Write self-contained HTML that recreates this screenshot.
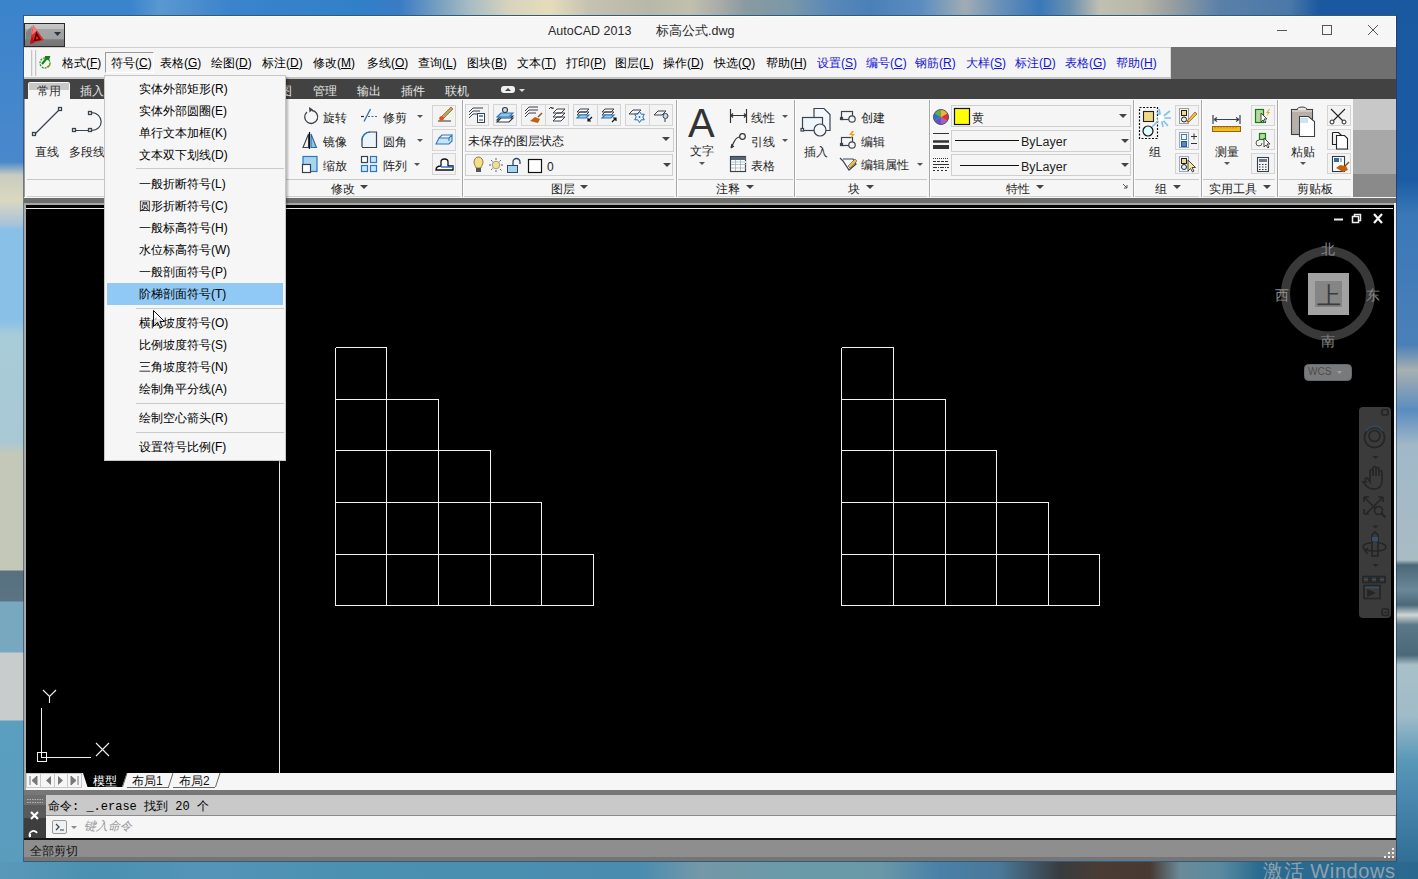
<!DOCTYPE html>
<html><head><meta charset="utf-8">
<style>
*{margin:0;padding:0;box-sizing:border-box}
html,body{width:1418px;height:879px;overflow:hidden}
body{position:relative;font-family:"Liberation Sans",sans-serif;font-size:12px;color:#222;background:#4a8ec0}
.a{position:absolute}
.t{position:absolute;white-space:nowrap;line-height:16px;height:16px;font-size:12px}
.mi{position:absolute;top:55px;white-space:nowrap;line-height:16px;font-size:12px;color:#000}
.mi u{text-decoration:underline}
.bl{color:#1414d4}
.tab{position:absolute;top:83px;line-height:16px;font-size:12px;color:#e6e6e6;white-space:nowrap}
.rt{color:#1e1e1e}
.sb{position:absolute;border:1px solid #d4d4d4;background:#f3f3f3}
.dd{position:absolute;border:1px solid #cfcfcf;background:#f5f5f5}
.arr{position:absolute;width:0;height:0;border-left:4px solid transparent;border-right:4px solid transparent;border-top:4px solid #444}
.arrs{position:absolute;width:0;height:0;border-left:3px solid transparent;border-right:3px solid transparent;border-top:3px solid #555}
.vsep{position:absolute;top:100px;width:2px;height:97px;background:#a8a8a8;border-right:1px solid #fff}
.ptl{position:absolute;top:179px;height:1px;background:#c8c8c8}
.menu .it{position:absolute;left:34px;line-height:16px;font-size:12px;color:#000;white-space:nowrap}
.menu .sp{position:absolute;left:31px;width:148px;height:1px;background:#cacaca}
</style></head><body>
<!-- ============ DESKTOP ============ -->
<div class="a" style="left:0;top:0;width:1418px;height:15px;background:linear-gradient(90deg,#3a84cc 0px,#3a84cc 130px,#5a98d0 160px,#4a8ccc 200px,#3a84cc 230px,#3080c8 360px,#3a7cc4 400px,#6a98c0 430px,#a8bcc4 470px,#d8d4bc 510px,#e4dcbc 550px,#c4c2b0 590px,#b8b8a8 650px,#c0c0ac 690px,#a8aca8 720px,#8a9aa0 745px,#7a98a8 790px,#5a88b8 830px,#4a80b8 870px,#5a8cc0 920px,#a0acb4 965px,#6a90b8 1000px,#3a78b8 1040px,#6a90b0 1070px,#c0c0b0 1100px,#b8b8a8 1140px,#9aa0a0 1170px,#5a80a8 1220px,#4a78a8 1290px,#1a58a0 1320px,#1a58a0 1418px)"></div>
<div class="a" style="left:0;top:15px;width:24px;height:864px;background:linear-gradient(180deg,#3c84cc 0px,#4a88cc 147px,#c8ccc0 160px,#dcd8c0 185px,#a8c4d8 209px,#88c0e8 215px,#88c0e8 305px,#a8ccd8 320px,#a8c8d4 425px,#c4c8b8 440px,#c4c8b8 555px,#587080 556px,#5a7484 586px,#78a8c0 587px,#78a8c0 637px,#c8cccc 638px,#c8cccc 705px,#5a9ec0 706px,#5a9cbc 864px)"></div>
<div class="a" style="left:1396px;top:15px;width:22px;height:864px;background:linear-gradient(180deg,#1a58a0 0px,#1c5ca4 165px,#3a78b8 200px,#4a80b8 330px,#a8b0b0 355px,#5a8cc0 395px,#a0b8c8 430px,#a8bcc4 545px,#4a6878 550px,#6a8898 575px,#4a6878 590px,#d0d8d8 600px,#5a7888 610px,#4a6878 640px,#a8c0c8 650px,#a0bcc8 700px,#5a98b8 745px,#4a88b0 780px,#2a6890 864px)"></div>
<div class="a" style="left:0;top:862px;width:1418px;height:17px;background:linear-gradient(90deg,#5a98b8 0px,#4a90b0 100px,#5494b8 200px,#4a90b0 360px,#4a8cb0 640px,#7498a8 700px,#6a9aa8 800px,#6a98a8 880px,#4a80a8 940px,#4a7898 1000px,#383c40 1060px,#4a3c34 1100px,#483a32 1150px,#6a8a98 1180px,#5a8aa0 1220px,#2a6a90 1260px,#2a6890 1418px)"></div>
<div class="a" style="left:1263px;top:859px;font-size:20px;letter-spacing:0.6px;line-height:24px;color:#8fa2ac;white-space:nowrap">激活 Windows</div>

<!-- ============ TITLE BAR ============ -->
<div class="a" style="left:23px;top:15px;width:1374px;height:847px;border:1px solid rgba(30,50,70,0.55)"></div>
<div class="a" style="left:24px;top:16px;width:1372px;height:31px;background:#f6f6f6;border-top:1px solid #fff;border-left:1px solid #fff;border-right:1px solid #fff"></div>
<div class="a" style="left:24px;top:23px;width:41px;height:24px;border:1px solid #2a2a2a;background:linear-gradient(180deg,#c8c8c8 0%,#c0c0c0 22%,#a4a4a4 24%,#a0a0a0 68%,#7a8a9a 70%,#7c7c7c 74%,#747474 100%)"></div>
<svg class="a" style="left:25px;top:24px" width="39" height="22" viewBox="0 0 39 22">
 <path d="M1 8 L7 2 L5 20 L1 20 Z" fill="#7a7a7a" opacity="0.8"/>
 <path d="M8 1 L19 16 L5 20 Z" fill="#e42424"/>
 <path d="M8 1 L12 6.5 L7 11 Z" fill="#f07a7a"/>
 <path d="M5 20 L7 11 L9 19 Z" fill="#b01818"/>
 <path d="M9.5 16.5 L11.5 9.5 L15 15.5 Z" fill="none" stroke="#500" stroke-width="1.6"/>
 <path d="M29 8 L36 8 L32.5 12 Z" fill="#2a3340"/>
</svg>
<div class="a" style="left:548px;top:23px;font-size:12.5px;line-height:16px;color:#2a2a2a;white-space:nowrap">AutoCAD 2013</div>
<div class="a" style="left:656px;top:23px;font-size:12.5px;line-height:16px;color:#2a2a2a;white-space:nowrap">标高公式.dwg</div>
<div class="a" style="left:1277px;top:30px;width:10px;height:1px;background:#555"></div>
<div class="a" style="left:1322px;top:25px;width:10px;height:10px;border:1px solid #555"></div>
<svg class="a" style="left:1367px;top:24px" width="12" height="12"><path d="M1 1 L11 11 M11 1 L1 11" stroke="#555" stroke-width="1"/></svg>

<!-- ============ MENU BAR ============ -->
<div class="a" style="left:24px;top:47px;width:1147px;height:32px;background:#f5f5f5;border-top:1px solid #cfcfcf;border-right:1px solid #d8d8d8"></div>
<div class="a" style="left:24px;top:77px;width:1147px;height:2px;background:#c4c4c4"></div>
<div class="a" style="left:1171px;top:47px;width:225px;height:32px;background:#6f706f"></div>
<div class="a" style="left:31px;top:50px;width:2px;height:26px;border-left:1px solid #c4c4c4;border-right:1px solid #e8e8e8"></div>
<div class="a" style="left:35px;top:50px;width:2px;height:26px;border-left:1px solid #c4c4c4;border-right:1px solid #e8e8e8"></div>
<svg class="a" style="left:38px;top:54px" width="14" height="16" viewBox="0 0 14 16">
 <circle cx="7" cy="9" r="5" fill="none" stroke="#2a9a2a" stroke-width="1.3" stroke-dasharray="2 1"/>
 <path d="M4 10 L9 4 M7 3 L11 3 L10 6" stroke="#108010" stroke-width="2" fill="none"/>
 <path d="M9 13 L12 11" stroke="#9a8a20" stroke-width="1.5"/>
</svg>
<div class="a" style="left:105px;top:52px;width:49px;height:21px;border-left:1px solid #9a9a9a;border-top:1px solid #9a9a9a;border-right:1px solid #fff;border-bottom:1px solid #fff"></div>
<div class="mi" style="left:62px">格式(<u>F</u>)</div>
<div class="mi" style="left:111px">符号(<u>C</u>)</div>
<div class="mi" style="left:160px">表格(<u>G</u>)</div>
<div class="mi" style="left:211px">绘图(<u>D</u>)</div>
<div class="mi" style="left:262px">标注(<u>D</u>)</div>
<div class="mi" style="left:313px">修改(<u>M</u>)</div>
<div class="mi" style="left:367px">多线(<u>O</u>)</div>
<div class="mi" style="left:418px">查询(<u>L</u>)</div>
<div class="mi" style="left:467px">图块(<u>B</u>)</div>
<div class="mi" style="left:517px">文本(<u>T</u>)</div>
<div class="mi" style="left:566px">打印(<u>P</u>)</div>
<div class="mi" style="left:615px">图层(<u>L</u>)</div>
<div class="mi" style="left:663px">操作(<u>D</u>)</div>
<div class="mi" style="left:714px">快选(<u>Q</u>)</div>
<div class="mi" style="left:766px">帮助(<u>H</u>)</div>
<div class="mi bl" style="left:817px">设置(<u>S</u>)</div>
<div class="mi bl" style="left:866px">编号(<u>C</u>)</div>
<div class="mi bl" style="left:915px">钢筋(<u>R</u>)</div>
<div class="mi bl" style="left:966px">大样(<u>S</u>)</div>
<div class="mi bl" style="left:1015px">标注(<u>D</u>)</div>
<div class="mi bl" style="left:1065px">表格(<u>G</u>)</div>
<div class="mi bl" style="left:1116px">帮助(<u>H</u>)</div>

<!-- ============ TAB BAR ============ -->
<div class="a" style="left:24px;top:79px;width:1372px;height:20px;background:#424242"></div>
<div class="a" style="left:28px;top:82px;width:42px;height:17px;background:#f5f5f5;border-radius:2px 2px 0 0"></div>
<div class="a" style="left:29px;top:83px;width:40px;height:7px;background:#c8c8c8"></div>
<div class="tab" style="left:37px;color:#333">常用</div>
<div class="tab" style="left:80px">插入</div>
<div class="tab" style="left:268px">视图</div>
<div class="tab" style="left:313px">管理</div>
<div class="tab" style="left:357px">输出</div>
<div class="tab" style="left:401px">插件</div>
<div class="tab" style="left:445px">联机</div>
<div class="a" style="left:501px;top:86px;width:14px;height:7px;background:#f0f0f0;border-radius:3px"></div>
<div class="arrs" style="left:505px;top:88px;border-top:0;border-bottom:3px solid #444"></div>
<div class="arrs" style="left:519px;top:89px;border-top-color:#ddd"></div>

<!-- ============ RIBBON ============ -->
<div class="a" style="left:24px;top:99px;width:1329px;height:99px;background:#f6f6f6;border-left:1px solid #9a9a9a"></div>
<div class="a" style="left:1353px;top:99px;width:43px;height:31px;background:#c8c8c8"></div>
<div class="a" style="left:1353px;top:130px;width:43px;height:44px;background:#a8a8a8"></div>
<div class="a" style="left:1353px;top:174px;width:43px;height:24px;background:#8a8a8a"></div>
<div class="a" style="left:24px;top:197px;width:1372px;height:1px;background:#f4f4f4"></div>
<div class="a" style="left:24px;top:198px;width:1372px;height:5px;background:#6b6d6b"></div>
<div class="a" style="left:24px;top:203px;width:1372px;height:2px;background:#a6a6a6"></div>

<div class="ptl" style="left:27px;width:433px"></div>
<div class="a" style="left:27px;top:196px;width:433px;height:1px;background:#d0d0d0"></div>
<div class="t rt" style="left:35px;top:144px;">直线</div>
<div class="t rt" style="left:69px;top:144px;">多段线</div>
<div class="t rt" style="left:323px;top:110px;">旋转</div>
<div class="t rt" style="left:323px;top:134px;">镜像</div>
<div class="t rt" style="left:323px;top:158px;">缩放</div>
<div class="t rt" style="left:383px;top:110px;">修剪</div>
<div class="t rt" style="left:383px;top:134px;">圆角</div>
<div class="t rt" style="left:383px;top:158px;">阵列</div>
<div class="arrs" style="left:417px;top:115px"></div>
<div class="arrs" style="left:417px;top:139px"></div>
<div class="arrs" style="left:414px;top:163px"></div>
<div class="sb" style="left:432px;top:105px;width:24px;height:22px"></div>
<div class="sb" style="left:432px;top:129px;width:24px;height:22px"></div>
<div class="sb" style="left:432px;top:153px;width:24px;height:22px"></div>
<div class="t rt" style="left:331px;top:181px;">修改</div>
<div class="arr" style="left:360px;top:185px"></div>
<div class="vsep" style="left:462px"></div>
<div class="ptl" style="left:464px;width:210px"></div>
<div class="a" style="left:464px;top:196px;width:210px;height:1px;background:#d0d0d0"></div>
<div class="sb" style="left:465px;top:104px;width:24px;height:22px"></div>
<div class="sb" style="left:493px;top:104px;width:24px;height:22px"></div>
<div class="sb" style="left:521px;top:104px;width:48px;height:22px"></div>
<div class="sb" style="left:573px;top:104px;width:48px;height:22px"></div>
<div class="sb" style="left:625px;top:104px;width:48px;height:22px"></div>
<div class="a" style="left:545px;top:105px;width:1px;height:20px;background:#d4d4d4"></div>
<div class="a" style="left:597px;top:105px;width:1px;height:20px;background:#d4d4d4"></div>
<div class="a" style="left:649px;top:105px;width:1px;height:20px;background:#d4d4d4"></div>
<div class="dd" style="left:465px;top:128px;width:209px;height:24px"></div>
<div class="dd" style="left:465px;top:154px;width:208px;height:22px"></div>
<div class="t rt" style="left:468px;top:133px;">未保存的图层状态</div>
<div class="arr" style="left:662px;top:137px"></div>
<div class="arr" style="left:663px;top:163px"></div>
<div class="t rt" style="left:547px;top:159px;">0</div>
<div class="t rt" style="left:551px;top:181px;">图层</div>
<div class="arr" style="left:580px;top:185px"></div>
<div class="vsep" style="left:676px"></div>
<div class="ptl" style="left:678px;width:115px"></div>
<div class="a" style="left:678px;top:196px;width:115px;height:1px;background:#d0d0d0"></div>
<div class="a" style="left:688px;top:101px;font-size:40px;line-height:44px;color:#333">A</div>
<div class="t rt" style="left:690px;top:143px;">文字</div>
<div class="arrs" style="left:699px;top:162px"></div>
<div class="t rt" style="left:751px;top:110px;">线性</div>
<div class="t rt" style="left:751px;top:134px;">引线</div>
<div class="t rt" style="left:751px;top:158px;">表格</div>
<div class="arrs" style="left:782px;top:115px"></div>
<div class="arrs" style="left:782px;top:139px"></div>
<div class="t rt" style="left:716px;top:181px;">注释</div>
<div class="arr" style="left:746px;top:185px"></div>
<div class="vsep" style="left:794px"></div>
<div class="ptl" style="left:796px;width:131px"></div>
<div class="a" style="left:796px;top:196px;width:131px;height:1px;background:#d0d0d0"></div>
<div class="t rt" style="left:804px;top:144px;">插入</div>
<div class="t rt" style="left:861px;top:110px;">创建</div>
<div class="t rt" style="left:861px;top:134px;">编辑</div>
<div class="t rt" style="left:861px;top:157px;">编辑属性</div>
<div class="arrs" style="left:917px;top:163px"></div>
<div class="t rt" style="left:848px;top:181px;">块</div>
<div class="arr" style="left:866px;top:185px"></div>
<div class="vsep" style="left:929px"></div>
<div class="ptl" style="left:931px;width:200px"></div>
<div class="a" style="left:931px;top:196px;width:200px;height:1px;background:#d0d0d0"></div>
<div class="dd" style="left:951px;top:105px;width:180px;height:22px"></div>
<div class="dd" style="left:951px;top:130px;width:180px;height:22px"></div>
<div class="dd" style="left:951px;top:154px;width:180px;height:22px"></div>
<div class="t rt" style="left:972px;top:110px;">黄</div>
<div class="t rt" style="left:1021px;top:134px;font-size:12.5px">ByLayer</div>
<div class="t rt" style="left:1021px;top:159px;font-size:12.5px">ByLayer</div>
<div class="arr" style="left:1119px;top:114px"></div>
<div class="arr" style="left:1121px;top:139px"></div>
<div class="arr" style="left:1121px;top:163px"></div>
<div class="t rt" style="left:1006px;top:181px;">特性</div>
<div class="arr" style="left:1036px;top:185px"></div>
<div class="vsep" style="left:1133px"></div>
<div class="ptl" style="left:1135px;width:64px"></div>
<div class="a" style="left:1135px;top:196px;width:64px;height:1px;background:#d0d0d0"></div>
<div class="t rt" style="left:1149px;top:144px;">组</div>
<div class="sb" style="left:1175px;top:105px;width:24px;height:21px"></div>
<div class="sb" style="left:1175px;top:129px;width:24px;height:21px"></div>
<div class="sb" style="left:1175px;top:153px;width:24px;height:21px"></div>
<div class="t rt" style="left:1155px;top:181px;">组</div>
<div class="arr" style="left:1173px;top:185px"></div>
<div class="vsep" style="left:1201px"></div>
<div class="ptl" style="left:1203px;width:72px"></div>
<div class="a" style="left:1203px;top:196px;width:72px;height:1px;background:#d0d0d0"></div>
<div class="t rt" style="left:1215px;top:144px;">测量</div>
<div class="arrs" style="left:1224px;top:162px"></div>
<div class="sb" style="left:1251px;top:105px;width:24px;height:21px"></div>
<div class="sb" style="left:1251px;top:129px;width:24px;height:21px"></div>
<div class="sb" style="left:1251px;top:153px;width:24px;height:21px"></div>
<div class="t rt" style="left:1209px;top:181px;">实用工具</div>
<div class="arr" style="left:1263px;top:185px"></div>
<div class="vsep" style="left:1277px"></div>
<div class="ptl" style="left:1279px;width:72px"></div>
<div class="a" style="left:1279px;top:196px;width:72px;height:1px;background:#d0d0d0"></div>
<div class="t rt" style="left:1291px;top:144px;">粘贴</div>
<div class="arrs" style="left:1300px;top:162px"></div>
<div class="sb" style="left:1327px;top:105px;width:24px;height:21px"></div>
<div class="sb" style="left:1327px;top:129px;width:24px;height:21px"></div>
<div class="sb" style="left:1327px;top:153px;width:24px;height:21px"></div>
<div class="t rt" style="left:1297px;top:181px;">剪贴板</div>
<svg class="a" style="left:0;top:0" width="1418" height="210" viewBox="0 0 1418 210">
<g fill="none" stroke="#3a4450" stroke-width="1.2">
 <path d="M35 134L59 110"/>
 <rect x="32.5" y="132.5" width="3" height="3" stroke-width="1.3"/><rect x="58.5" y="107.5" width="3" height="3" stroke-width="1.3"/>
 <path d="M76 130.5H89M91 112.5c13 0 14 18 0 18"/>
 <rect x="72.5" y="128.5" width="3" height="3" stroke-width="1.3"/><rect x="88.5" y="128.5" width="3" height="3" stroke-width="1.3"/><rect x="88.5" y="111.5" width="3" height="3" stroke-width="1.3"/>
</g>
<!-- modify icons -->
<g fill="none" stroke="#3a4048" stroke-width="1.3">
 <path d="M312 110.5a6.5 6.5 0 1 1 -5 1.5"/>
</g>
<path d="M309 107l4 2.5l-3.5 3z" fill="#3a4048"/>
<path d="M303 147.5L308.5 134V147.5Z" fill="none" stroke="#3a4048" stroke-width="1.1"/>
<path d="M309.5 132V149" stroke="#111" stroke-width="1.2"/>
<path d="M311 147.5V134L316.5 147.5Z" fill="#8cc4e4" stroke="#2a6aa8" stroke-width="1.1"/>
<rect x="303" y="156.5" width="14" height="15" fill="#a8d4ec" stroke="#2a78c0" stroke-width="1.2"/>
<rect x="302.5" y="164.5" width="8" height="8" fill="#fff" stroke="#3a4048" stroke-width="1.2"/>
<path d="M364 121.5L370.5 109" stroke="#2a6ab8" stroke-width="1.3" fill="none"/><path d="M361 116.5h3" stroke="#333" stroke-width="1.2"/><path d="M368 116.5h2M371.5 116.5h2M375 116.5h2" stroke="#2a6ab8" stroke-width="1.1"/>
<path d="M362 147V140a8 8 0 0 1 8-8h6.5V147.5H362" fill="#eaf4fa" stroke="#3a4048" stroke-width="1.2"/>
<path d="M362 140a8 8 0 0 1 8-8" fill="none" stroke="#2a78c0" stroke-width="1.3"/>
<g stroke-width="1.2"><rect x="361.5" y="156.5" width="6" height="6" fill="#fff" stroke="#3a4048"/><rect x="370.5" y="156.5" width="6" height="6" fill="#cde6f4" stroke="#2a78c0"/><rect x="361.5" y="165.5" width="6" height="6" fill="#cde6f4" stroke="#2a78c0"/><rect x="370.5" y="165.5" width="6" height="6" fill="#cde6f4" stroke="#2a78c0"/></g>
<path d="M438 121h13" stroke="#333" stroke-width="1"/>
<path d="M441 117l10-10l2 2l-10 10z" fill="#c8a060" stroke="#8a6a30" stroke-width="0.8"/>
<circle cx="441.5" cy="118.5" r="2.3" fill="#e05010"/>
<path d="M436 144l3-6h10l3-3v6l-3 3h-10z" fill="#c8e4f4" stroke="#2a78c0" stroke-width="1.1"/>
<path d="M439 138l3-3h10M449 141v-3" stroke="#2a78c0" stroke-width="1.1" fill="none"/>
<path d="M436 170c0-4 4-4 5-4v-4c0-4 7-4 7 0v4h5v4z" fill="#fff" stroke="#111" stroke-width="1.3"/>
<path d="M441 167h12" stroke="#2a78c0" stroke-width="1.5"/>
<!-- layer icons -->
<g fill="none" stroke="#3a4048" stroke-width="1">
 <path d="M469 112l4-4h10M469 115l4-4h7M469 118l4-4h6"/>
 <rect x="477.5" y="113.5" width="7" height="9" fill="#fff"/>
 <path d="M479 116h4" stroke="#2a6ab0" stroke-width="1.5"/><path d="M479 120h4"/>
</g>
<g stroke="#2a3a4a" stroke-width="1.1" fill="none">
 <path d="M497 120l4-4h12l-4 4z" fill="#fff"/><path d="M497 122l4-4h12l-4 4z" fill="#fff"/>
 <path d="M497 117l4-4h12l-4 4z" fill="#8ac8f0" stroke="#2a78c0"/>
 <circle cx="505" cy="110" r="2.5" fill="#ddd"/>
</g>
<g stroke="#3a4048" stroke-width="1" fill="none">
 <path d="M525 111l4-4h9M525 114l4-4h9M525 117l4-4h7"/>
</g>
<path d="M530 121l5-4l5 2l-2 4z" fill="#c06010"/><path d="M538 117l4-4" stroke="#8a5020" stroke-width="1.5"/>
<g stroke="#3a4048" stroke-width="1" fill="none">
 <path d="M553 113l4-4h8l-4 4zM553 117l4-4h8l-4 4zM553 121l4-4h8l-4 4z" fill="#fff"/>
 <path d="M549 109l2-2l2 2M551 107v1h3"/>
</g>
<g stroke="#3a4048" stroke-width="1" fill="none">
 <path d="M577 112l3-3h9l-3 3zM577 115l3-3h9l-3 3z" fill="#fff"/>
 <path d="M577 118l3-3h9l-3 3z" fill="#9ad0f0" stroke="#2a78c0" stroke-width="1.2"/>
 <path d="M592 117l-4 4M588 118v3h3" stroke="#111" stroke-width="1.2"/>
 <path d="M602 112l3-3h9l-3 3zM602 115l3-3h9l-3 3z" fill="#fff"/>
 <path d="M602 118l3-3h9l-3 3z" fill="#9ad0f0" stroke="#2a78c0" stroke-width="1.2"/>
 <path d="M612 122l4-4M613 118h3v3" stroke="#111" stroke-width="1.2"/>
</g>
<g stroke="#3a4048" stroke-width="1" fill="none">
 <path d="M629 114l4-4h8l-4 4z"/>
 <path d="M639.5 111.5l1.8 2.7h3l-1.5 2.8l1.5 2.8h-3l-1.8 2.7l-1.8-2.7h-3l1.5-2.8l-1.5-2.8h3z" stroke="#2a6ab8" fill="#e8f2fa"/><circle cx="639.5" cy="117" r="0.9" fill="#2a6ab8" stroke="none"/>
 <path d="M654 115l4-4h8l-4 4z"/>
 <circle cx="665.5" cy="116" r="2.5" fill="#bde"/><path d="M665 119v3" stroke="#333"/>
</g>
<path d="M474 162a4.5 5 0 1 1 9 0c0 3-2 4-2 6h-5c0-2-2-3-2-6z" fill="#f4e080" stroke="#6a6040" stroke-width="0.8"/>
<rect x="476" y="168" width="5" height="4" fill="#555"/>
<circle cx="496" cy="165" r="3.8" fill="#f0e090" stroke="#888" stroke-width="0.8"/>
<path d="M496 158v2M496 170v2M489 165h2M501 165h2M491 160l1.5 1.5M500 169l1.5 1.5M501 160l-1.5 1.5M491 170l1.5-1.5" stroke="#555" stroke-width="0.9"/>
<rect x="507.5" y="165.5" width="10" height="7" fill="#a8d4ec" stroke="#2a4a6a" stroke-width="1"/>
<path d="M513 165v-3a3.5 3.5 0 0 1 7 0v2" fill="none" stroke="#2a4a6a" stroke-width="1.3"/>
<rect x="528.5" y="159.5" width="13" height="13" fill="#fff" stroke="#111" stroke-width="1.2"/>
<!-- annotation icons -->
<g stroke="#333" stroke-width="1.2" fill="none">
 <path d="M730.5 109V123M746.5 109V123M731 115.5H746"/>
 <path d="M733 113.5l-2 2l2 2M744 113.5l2 2l-2 2"/>
 <circle cx="742.5" cy="136.5" r="2.8"/>
 <path d="M740 137c-4 0-5 3-6 5l-3 6M731 148l1-4M731 148l3-2"/>
 <rect x="730.5" y="156.5" width="15" height="15" fill="#fff" stroke="#3a4450"/>
</g>
<rect x="731" y="157" width="15" height="3" fill="#5a6470"/>
<path d="M731 161h15v2h-15z" fill="#cde6f0"/>
<path d="M735.5 160v11M740.5 160v11M731 164.5h15M731 168h15" stroke="#aab" stroke-width="0.8"/>
<!-- block icons -->
<g stroke="#3a4450" stroke-width="1.2" fill="none">
 <path d="M814 108.5h10l6 6v16h-16z" fill="#f2f8fb"/>
 <rect x="802.5" y="117.5" width="20" height="13" fill="#eef6fa"/>
 <circle cx="820" cy="130" r="6" fill="#f6f6f6"/>
 <rect x="801" y="128.5" width="2.5" height="2.5" fill="#fff"/>
 <rect x="841.5" y="111.5" width="11" height="8"/><circle cx="852" cy="119" r="3.2" fill="#f6f6f6"/><rect x="840.5" y="117.5" width="2" height="2"/>
 <rect x="841.5" y="137.5" width="11" height="8"/><circle cx="852" cy="145" r="3.2" fill="#f6f6f6"/><rect x="840.5" y="143.5" width="2" height="2"/>
 <path d="M840 158l3 3l6 9l7-6l-3-5h-10"/>
</g>
<path d="M852 131l-3 4h3l-2 4l5-5h-3l2-3z" fill="#f0a010"/>
<path d="M848 166l7-7l2 2l-7 7z" fill="#f0c040" stroke="#555" stroke-width="0.6"/>
<!-- properties icons -->
<circle cx="941" cy="117" r="7.5" fill="#e0c040"/>
<path d="M941 117L941 109.5A7.5 7.5 0 0 0 934.5 113.2Z" fill="#60b040"/>
<path d="M941 117L934.5 113.2A7.5 7.5 0 0 0 934.5 120.8Z" fill="#3070d0"/>
<path d="M941 117L934.5 120.8A7.5 7.5 0 0 0 941 124.5Z" fill="#6a50c0"/>
<path d="M941 117L941 124.5A7.5 7.5 0 0 0 947.5 120.8Z" fill="#a060d0"/>
<path d="M941 117L947.5 120.8A7.5 7.5 0 0 0 947.5 113.2Z" fill="#e03030"/>
<path d="M941 117L947.5 113.2A7.5 7.5 0 0 0 941 109.5Z" fill="#f0b040"/>
<circle cx="941" cy="117" r="7.5" fill="none" stroke="#4a5a6a" stroke-width="1"/>
<rect x="954.5" y="108.5" width="15" height="16" fill="#ffff00" stroke="#111" stroke-width="1.2"/>
<path d="M933 133.5h16" stroke="#333" stroke-width="1"/>
<path d="M933 141.5h16" stroke="#333" stroke-width="2.5"/>
<path d="M933 147h16" stroke="#333" stroke-width="4"/>
<path d="M933 158.5h16" stroke="#333" stroke-width="1" stroke-dasharray="1 1"/><path d="M933 161.5h16" stroke="#333" stroke-width="1" stroke-dasharray="3 1"/><path d="M933 164.5h16" stroke="#333" stroke-width="1"/><path d="M933 167.5h16" stroke="#333" stroke-width="1" stroke-dasharray="4 1 1 1"/><path d="M933 170.5h16" stroke="#333" stroke-width="1" stroke-dasharray="2 2"/>
<path d="M955 140.5H1019M960 165.5H1019" stroke="#111" stroke-width="1"/>
<path d="M1123 184l4 4M1127 185v3h-3" stroke="#555" stroke-width="1" fill="none"/>
<!-- group icons -->
<rect x="1139.5" y="107.5" width="18" height="31" fill="none" stroke="#111" stroke-width="1.2" stroke-dasharray="2 1.5"/>
<rect x="1143.5" y="111.5" width="10" height="10" fill="#f0d888" stroke="#222" stroke-width="1.1"/>
<circle cx="1148" cy="131" r="5" fill="#dff" stroke="#111" stroke-width="1.2"/>
<path d="M1161 118l9-7M1161 118l7 8M1161 118h10M1161 118l-2-9M1161 118l-4 -6M1152 127l9-9M1161 118l2 9" stroke="#7ac4ea" stroke-width="1.6"/><circle cx="1161" cy="118" r="3.5" fill="#fff"/>
<g stroke-width="1" fill="none">
 <rect x="1179.5" y="108.5" width="9" height="15" stroke="#444" stroke-dasharray="1 1"/>
 <rect x="1181.5" y="110.5" width="5" height="5" fill="#f0d888" stroke="#222"/><circle cx="1184" cy="119.5" r="2.5" fill="#e0f4fa" stroke="#222"/>
 <path d="M1187 121l8-9l2 2l-8 8z" fill="#e8c040" stroke="#a06020" stroke-width="0.8"/><path d="M1187 121l1 1" stroke="#e04040" stroke-width="2"/>
 <rect x="1179.5" y="132.5" width="9" height="15" stroke="#3a5a9a" stroke-dasharray="1 1"/>
 <rect x="1181.5" y="134.5" width="5" height="5" stroke="#4a7ab0"/><rect x="1181.5" y="141.5" width="5" height="5" fill="#4a8ad0" stroke="#2a5a90"/>
 <path d="M1191 136.5h6M1194 133.5v6M1191 143.5h6" stroke="#333"/>
 <rect x="1179.5" y="156.5" width="9" height="15" stroke="#3a5a9a" stroke-dasharray="1 1"/>
 <rect x="1181.5" y="158.5" width="5" height="5" fill="#f0d888" stroke="#222"/><circle cx="1184" cy="167" r="2.5" fill="#e0f4fa" stroke="#222"/>
 <path d="M1188 160v11l2.5-2.5l2 3.5l1.5-1l-2-3.5h3.5z" fill="#f4e8a0" stroke="#333" stroke-width="0.9"/>
</g>
<!-- utilities -->
<path d="M1213 115v9M1240 115v9M1214 119.5h25M1214 119.5l3-2M1214 119.5l3 2M1239 119.5l-3-2M1239 119.5l-3 2" stroke="#3a4450" stroke-width="1.2" fill="none"/>
<rect x="1212.5" y="126.5" width="28" height="5" fill="#f0c020" stroke="#a06010" stroke-width="1"/>
<path d="M1215 127v1.5M1218 127v1.5M1221 127v1.5M1224 127v1.5M1227 127v1.5M1230 127v1.5M1233 127v1.5M1236 127v1.5" stroke="#a06010" stroke-width="0.7"/>
<rect x="1255.5" y="109.5" width="8" height="13" fill="#b8d8a0" stroke="#108010" stroke-width="1.2"/>
<path d="M1261 113v9l2-2l2 3l1-1l-2-3h3z" fill="#fff" stroke="#333" stroke-width="0.9"/>
<path d="M1269 109l-3 4h2l-2 4l4-5h-2l2-3z" fill="#f0a010"/>
<rect x="1259.5" y="133.5" width="6" height="6" fill="#b8d8a0" stroke="#108010" stroke-width="1.2"/>
<path d="M1259 140a3 3 0 1 0 3 3" stroke="#555" stroke-width="1" fill="none"/>
<path d="M1264 138v9l2-2l2 3l1-1l-2-3h3z" fill="#fff" stroke="#333" stroke-width="0.9"/>
<rect x="1257.5" y="157.5" width="11" height="14" fill="#f4f4f4" stroke="#3a4450" stroke-width="1.1"/>
<rect x="1259" y="159" width="8" height="3" fill="#6a7a8a"/>
<path d="M1259 164.5h1.5M1262 164.5h1.5M1265 164.5h1.5M1259 167h1.5M1262 167h1.5M1265 167h1.5M1259 169.5h1.5M1262 169.5h1.5M1265 169.5h1.5" stroke="#333" stroke-width="1"/>
<!-- clipboard -->
<rect x="1291.5" y="109.5" width="21" height="25" fill="#b8b0a8" stroke="#3a4048" stroke-width="1.1"/>
<path d="M1292 110h20v2h-20z" fill="#d0c8c0"/>
<path d="M1297 110a5 3 0 0 1 10 0" fill="#e8e8e8" stroke="#3a4048" stroke-width="1.1"/>
<path d="M1299.5 116.5h9l6 5v15h-15z" fill="#fff" stroke="#3a4048" stroke-width="1.1"/>
<path d="M1300 118h8v5h-8z" fill="#cde4ee"/>
<path d="M1331 109l14 14M1345 109l-14 14" stroke="#222" stroke-width="1.1"/>
<circle cx="1332" cy="122" r="2" fill="#fff" stroke="#222"/><circle cx="1344" cy="122" r="2" fill="#fff" stroke="#222"/>
<path d="M1332.5 132.5h6l3 3M1332.5 132.5v12h4" fill="none" stroke="#222" stroke-width="1.1"/>
<path d="M1336.5 135.5h8l3 3v10.5h-11z" fill="#fff" stroke="#222" stroke-width="1.1"/>
<rect x="1332.5" y="156.5" width="12" height="15" fill="#fff" stroke="#2a3a4a" stroke-width="1.1"/>
<rect x="1334" y="158" width="5" height="4" fill="#3a6aa0"/><path d="M1341 158v4" stroke="#6a8aaa" stroke-width="1.2"/>
<path d="M1336 168l4-3l6 1l2 4l-5 2z" fill="#c06010"/><path d="M1345 166l4-4" stroke="#8a5020" stroke-width="1.5"/>
</svg>

<!-- ============ DRAWING ============ -->
<div class="a" style="left:24px;top:205px;width:2px;height:585px;background:#a8a8a8"></div>
<div class="a" style="left:26px;top:205px;width:1368px;height:568px;background:#000"></div>
<div class="a" style="left:1394px;top:203px;width:2px;height:587px;background:#f0f0f0"></div>
<svg class="a" style="left:0;top:0" width="1418" height="879" viewBox="0 0 1418 879" shape-rendering="crispEdges">
<path d="M335.5 347.5H386.5M335.5 347.5V399.5M386.5 347.5V399.5M335.5 399.5H438.5M335.5 399.5V450.5M386.5 399.5V450.5M438.5 399.5V450.5M335.5 450.5H490.5M335.5 450.5V502.5M386.5 450.5V502.5M438.5 450.5V502.5M490.5 450.5V502.5M335.5 502.5H541.5M335.5 502.5V554.5M386.5 502.5V554.5M438.5 502.5V554.5M490.5 502.5V554.5M541.5 502.5V554.5M335.5 554.5H593.5M335.5 554.5V605.5M386.5 554.5V605.5M438.5 554.5V605.5M490.5 554.5V605.5M541.5 554.5V605.5M593.5 554.5V605.5M335.5 605.5H593.5M841.5 347.5H893.5M841.5 347.5V399.5M893.5 347.5V399.5M841.5 399.5H945.5M841.5 399.5V450.5M893.5 399.5V450.5M945.5 399.5V450.5M841.5 450.5H996.5M841.5 450.5V502.5M893.5 450.5V502.5M945.5 450.5V502.5M996.5 450.5V502.5M841.5 502.5H1048.5M841.5 502.5V554.5M893.5 502.5V554.5M945.5 502.5V554.5M996.5 502.5V554.5M1048.5 502.5V554.5M841.5 554.5H1099.5M841.5 554.5V605.5M893.5 554.5V605.5M945.5 554.5V605.5M996.5 554.5V605.5M1048.5 554.5V605.5M1099.5 554.5V605.5M841.5 605.5H1099.5" stroke="#f2f2f2" stroke-width="1" fill="none"/>
<path d="M26 208.5H1393M279.5 461V773" stroke="#e8e8e8" stroke-width="1" fill="none"/>
</svg>
<svg class="a" style="left:0;top:0" width="1418" height="879" viewBox="0 0 1418 879">
<path d="M41.5 708V757.5H91M37.5 752.5h9v9h-9z" stroke="#f0f0f0" stroke-width="1" fill="none" shape-rendering="crispEdges"/>
<path d="M43 690L49.5 696.5L56 690M49.5 696.5V703M96 743L109 756M109 743L96 756" stroke="#f0f0f0" stroke-width="1.1" fill="none"/>
<circle cx="1328" cy="293.5" r="42.5" fill="none" stroke="#393939" stroke-width="9"/>
<path d="M1334 219.5h9" stroke="#eee" stroke-width="2"/>
<rect x="1354.5" y="214.5" width="6" height="6" fill="none" stroke="#eee" stroke-width="1.5"/>
<rect x="1352.5" y="216.5" width="6" height="6" fill="#000" stroke="#eee" stroke-width="1.5"/>
<path d="M1374 214L1382 223M1382 214L1374 223" stroke="#f4f4f4" stroke-width="2.2"/>
<rect x="1308" y="273" width="41" height="42" fill="#a2a2a2"/>
<rect x="1315" y="281" width="27" height="26" fill="#858585"/>
<rect x="1304.5" y="364.5" width="47" height="16" rx="4" fill="#7a7a7a" stroke="#5f6c78" stroke-width="1"/>
<path d="M1337 371h5l-2.5 3z" fill="#8aa"/>
<rect x="1359" y="407" width="32" height="211" rx="4" fill="#3b3b3b"/>
<g stroke="#252525" fill="none" stroke-width="1.6">
 <rect x="1382" y="409.5" width="6" height="5.5" rx="1"/>
 <circle cx="1374.5" cy="437.5" r="10"/><circle cx="1374.5" cy="436" r="5.5"/>
 <path d="M1366 431a10 10 0 0 1 17 0" stroke="#34465a" stroke-width="2"/>
 <path d="M1366 482c-2-3 0-6 2-3l2 3v-11c0-2 3-2 3 0v5v-8c0-2 3-2 3 0v8v-7c0-2 3-2 3 0v7v-4c0-2 3-2 3 0v8c0 6-3 9-8 9h-2c-3 0-5-2-9-7z"/>
 <path d="M1364 497l12 12M1364 497h5M1364 497v5M1383 497l-17 17M1383 497h-5M1383 497v5M1364 514h5M1364 514v-5"/>
 <circle cx="1378.5" cy="510.5" r="4"/><path d="M1381.5 513.5l4 4" stroke-width="2.2"/>
 <path d="M1372 535l3-3l3 3v21h-6z"/>
 <path d="M1372 537h6v4h-6z" fill="#34506a" stroke="none"/>
 <path d="M1371 543c-5 0-8 2-8 4s4 4 12 4s11-2 11-4s-3-4-8-4"/>
 <path d="M1368 548l-3 3l3 3" />
 <rect x="1363" y="576.5" width="6" height="6"/><rect x="1371" y="576.5" width="6" height="6"/><rect x="1379" y="576.5" width="6" height="6"/>
 <path d="M1364 579.5h4M1372 579.5h4M1380 579.5h4" stroke="#34506a" stroke-width="1.2"/>
 <rect x="1364" y="585.5" width="16" height="13"/>
 <path d="M1365 587.5h14" stroke="#34506a" stroke-width="1.5"/>
 <path d="M1368 590v6l6-3z" fill="#252525"/>
 <rect x="1382" y="609" width="6.5" height="6.5" rx="1.5"/><path d="M1383.5 612.5h3.5" stroke-width="1.2"/>
</g>
<path d="M1372.5 456h6l-3 3z M1372.5 525.5h6l-3 3z M1372.5 564h6l-3 3z" fill="#252525"/>
</svg>
<div class="a" style="left:1317px;top:282px;font-size:24px;line-height:28px;color:#3c3c3c">上</div>
<div class="a" style="left:1321px;top:241px;font-size:14px;line-height:16px;color:#8a8a8a">北</div>
<div class="a" style="left:1321px;top:333px;font-size:14px;line-height:16px;color:#8a8a8a">南</div>
<div class="a" style="left:1275px;top:287px;font-size:14px;line-height:16px;color:#8a8a8a">西</div>
<div class="a" style="left:1366px;top:287px;font-size:14px;line-height:16px;color:#8a8a8a">东</div>
<div class="a" style="left:1308px;top:366px;font-size:10px;line-height:12px;color:#4c4c4c">WCS</div>


<!-- ============ LAYOUT TABS / CMD / STATUS ============ -->
<div class="a" style="left:26px;top:773px;width:1368px;height:17px;background:#f6f6f6"></div>
<svg class="a" style="left:24px;top:773px" width="200" height="17" viewBox="0 0 200 17">
 <rect x="2.5" y="0.5" width="55" height="14" fill="#f6f6f6" stroke="#c8c8c8"/>
 <path d="M16.5 0.5V14.5M30.5 0.5V14.5M43.5 0.5V14.5" stroke="#c8c8c8"/>
 <path d="M6 3V12M13 3L8 7.5L13 12Z" fill="#777" stroke="#777" stroke-width="1"/>
 <path d="M27 3L22 7.5L27 12Z" fill="#777"/>
 <path d="M34 3L39 7.5L34 12Z" fill="#777"/>
 <path d="M47 3L52 7.5L47 12ZM54 3V12" fill="#777" stroke="#777" stroke-width="1"/>
 <path d="M59 0L63.5 14H98L103 0Z" fill="#000"/>
 <path d="M103 0L98.5 14M103 14.5H145M149 0L144.5 14M149 14.5H191M196 0L191.5 14" stroke="#666" fill="none"/>
</svg>
<div class="t" style="left:93px;top:773px;color:#fff">模型</div>
<div class="t" style="left:132px;top:773px;color:#111">布局1</div>
<div class="t" style="left:179px;top:773px;color:#111">布局2</div>

<div class="a" style="left:24px;top:790px;width:1372px;height:5px;background:#777"></div>
<div class="a" style="left:24px;top:795px;width:1372px;height:21px;background:#c9c9c9;border-bottom:1px solid #8a8a8a"></div>
<div class="a" style="left:24px;top:816px;width:1372px;height:22px;background:#f6f6f6;border-right:1px solid #d0d0d0"></div>
<div class="a" style="left:24px;top:838px;width:1372px;height:2px;background:#151515"></div>
<div class="a" style="left:24px;top:840px;width:1372px;height:17px;background:#8e8e8e"></div>
<div class="a" style="left:24px;top:857px;width:1372px;height:4px;background:#757575"></div>
<div class="a" style="left:24px;top:795px;width:22px;height:43px;background:#3e3e3e"></div>
<div class="a" style="left:24px;top:795px;width:22px;height:10px;background:#6e6e6e"></div>
<div class="a" style="left:24px;top:805px;width:22px;height:13px;background:#5a5a5a"></div>
<svg class="a" style="left:24px;top:795px" width="22" height="43">
 <path d="M3 4.5h16M3 7.5h16" stroke="#b4b4b4" stroke-width="1" stroke-dasharray="1.5 1"/>
 <path d="M7 17L14 24M14 17L7 24" stroke="#fff" stroke-width="2.2"/>
 <path d="M6 42a4 4 0 0 1 7-4" stroke="#fff" stroke-width="1.8" fill="none"/>
 <rect x="5" y="39" width="2" height="3" fill="#fff"/>
</svg>
<div class="a" style="left:48px;top:799px;font-family:'Liberation Mono',monospace;font-size:12px;line-height:16px;color:#000;white-space:pre">命令: _.erase 找到 20 个</div>
<div class="a" style="left:52px;top:820px;width:15px;height:14px;border:1px solid #999;border-radius:2px;background:#f0f0f0"></div>
<svg class="a" style="left:52px;top:820px" width="28" height="14"><path d="M4 4l3 3l-3 3M8 10h4" stroke="#345" stroke-width="1.2" fill="none"/><path d="M19 6h6l-3 3z" fill="#888"/></svg>
<div class="a" style="left:84px;top:818px;font-size:12px;line-height:16px;color:#9a9a9a;font-style:italic;white-space:nowrap">键入命令</div>
<div class="a" style="left:30px;top:843px;font-size:12px;line-height:16px;color:#111;white-space:nowrap">全部剪切</div>
<svg class="a" style="left:1382px;top:847px" width="14" height="14"><g fill="#f0f0f0"><rect x="10" y="1" width="2" height="2"/><rect x="6" y="5" width="2" height="2"/><rect x="10" y="5" width="2" height="2"/><rect x="2" y="9" width="2" height="2"/><rect x="6" y="9" width="2" height="2"/><rect x="10" y="9" width="2" height="2"/></g></svg>


<div class="a menu" style="left:104px;top:75px;width:182px;height:386px;background:#f6f6f6;border:1px solid #c6c6c6;box-shadow:2px 2px 2px rgba(0,0,0,0.25)">
<div class="a" style="left:2px;top:207px;width:176px;height:22px;background:#91c9f5"></div>
<div class="it" style="top:5px">实体外部矩形(R)</div>
<div class="it" style="top:27px">实体外部圆圈(E)</div>
<div class="it" style="top:49px">单行文本加框(K)</div>
<div class="it" style="top:71px">文本双下划线(D)</div>
<div class="it" style="top:100px">一般折断符号(L)</div>
<div class="it" style="top:122px">圆形折断符号(C)</div>
<div class="it" style="top:144px">一般标高符号(H)</div>
<div class="it" style="top:166px">水位标高符号(W)</div>
<div class="it" style="top:188px">一般剖面符号(P)</div>
<div class="it" style="top:210px">阶梯剖面符号(T)</div>
<div class="it" style="top:239px">横向坡度符号(O)</div>
<div class="it" style="top:261px">比例坡度符号(S)</div>
<div class="it" style="top:283px">三角坡度符号(N)</div>
<div class="it" style="top:305px">绘制角平分线(A)</div>
<div class="it" style="top:334px">绘制空心箭头(R)</div>
<div class="it" style="top:363px">设置符号比例(F)</div>
<div class="sp" style="top:92px"></div>
<div class="sp" style="top:232px"></div>
<div class="sp" style="top:327px"></div>
<div class="sp" style="top:356px"></div>
</div>

<svg class="a" style="left:152px;top:309px" width="14" height="20" viewBox="0 0 14 20"><path d="M1.5 1.5V17.5L5.5 13.5L8.5 19L10.5 18L7.8 12.5H12.5Z" fill="rgba(255,255,255,0.6)" stroke="#111" stroke-width="1" stroke-linejoin="miter"/></svg>
</body></html>
